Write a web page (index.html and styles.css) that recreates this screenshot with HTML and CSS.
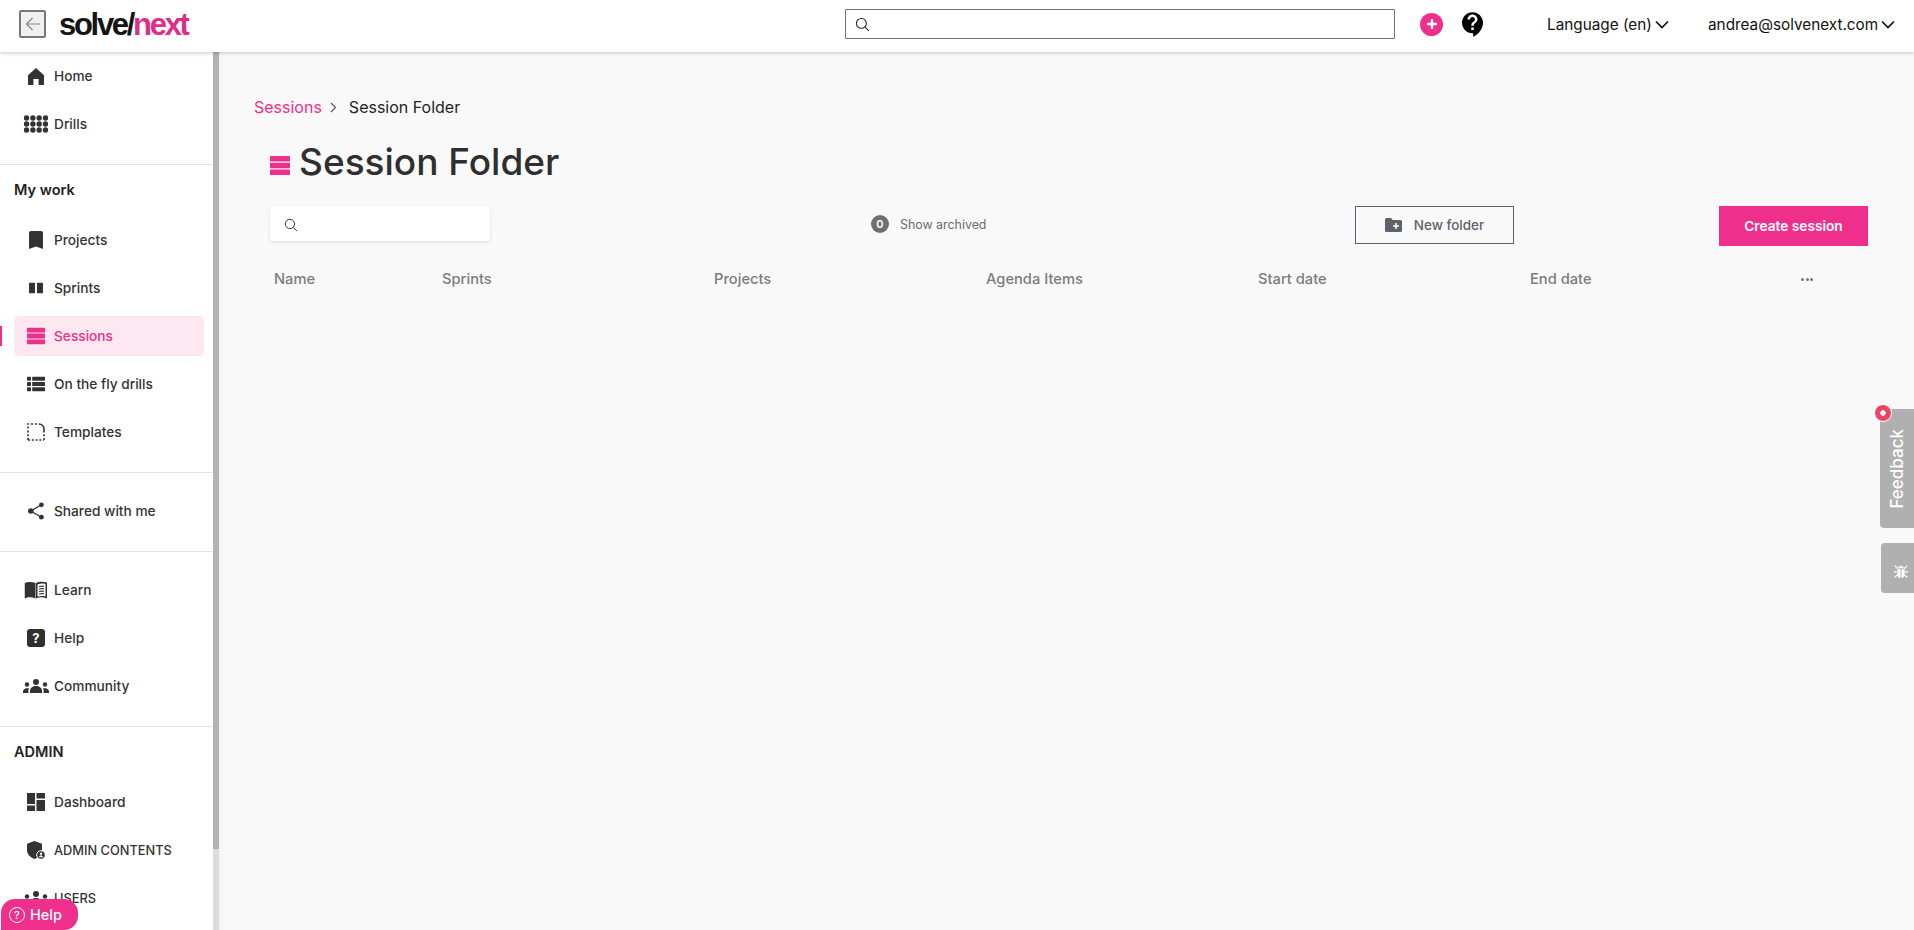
FILE: index.html
```html
<!DOCTYPE html>
<html lang="en">
<head>
<meta charset="utf-8">
<title>Session Folder</title>
<link rel="stylesheet" href="styles.css">
</head>
<body>
<svg class="defs" width="0" height="0" aria-hidden="true">
  <symbol id="i-search" viewBox="0 0 16 16"><circle cx="6.8" cy="6.8" r="5.3" fill="none" stroke="currentColor" stroke-width="1.1"/><path d="M10.8 10.8l4 4" stroke="currentColor" stroke-width="1.1" fill="none"/></symbol>
  <symbol id="i-home" viewBox="0 0 18 18"><path d="M1 8.2 9 1l8 7.2V18h-5.4v-6H6.4v6H1z" fill="currentColor"/></symbol>
  <symbol id="i-drills" viewBox="0 0 25 18"><g fill="currentColor"><circle cx="3" cy="3" r="2.7"/><circle cx="9.4" cy="3" r="2.7"/><circle cx="15.7" cy="3" r="2.7"/><circle cx="22" cy="3" r="2.7"/><circle cx="3" cy="9" r="2.7"/><circle cx="9.4" cy="9" r="2.7"/><circle cx="15.7" cy="9" r="2.7"/><circle cx="22" cy="9" r="2.7"/><circle cx="3" cy="15" r="2.7"/><circle cx="9.4" cy="15" r="2.7"/><circle cx="15.7" cy="15" r="2.7"/><circle cx="22" cy="15" r="2.7"/></g></symbol>
  <symbol id="i-book" viewBox="0 0 14 18"><path d="M2 0h10a2 2 0 0 1 2 2v16l-7-2.6L0 18V2a2 2 0 0 1 2-2z" fill="currentColor"/></symbol>
  <symbol id="i-sprints" viewBox="0 0 14 11"><rect width="6" height="11" rx=".8" fill="currentColor"/><rect x="8" width="6" height="11" rx=".8" fill="currentColor"/></symbol>
  <symbol id="i-sessions" viewBox="0 0 18 17"><g fill="currentColor"><rect width="18" height="5" rx=".6"/><rect y="6" width="18" height="5" rx=".6"/><rect y="12" width="18" height="5" rx=".6"/></g></symbol>
  <symbol id="i-fly" viewBox="0 0 18 15"><g fill="currentColor"><rect width="4" height="4.2" rx=".8"/><rect y="5.4" width="4" height="4.2" rx=".6"/><rect y="10.8" width="4" height="4.2" rx=".8"/><rect x="5.2" width="12.8" height="4.2" rx=".8"/><rect x="5.2" y="5.4" width="12.8" height="4.2" rx=".6"/><rect x="5.2" y="10.8" width="12.8" height="4.2" rx=".8"/></g></symbol>
  <symbol id="i-tpl" viewBox="0 0 18 18"><path d="M1 17V1h11" fill="none" stroke="currentColor" stroke-width="1.6" stroke-dasharray="2 1.8"/><path d="M17 17V9M1 17h16" fill="none" stroke="currentColor" stroke-width="1.6" stroke-dasharray="2 1.8"/><path d="M12 1a5 5 0 0 1 5 5v3" fill="none" stroke="currentColor" stroke-width="1.6"/></symbol>
  <symbol id="i-share" viewBox="0 0 16 18"><g fill="currentColor"><circle cx="13.4" cy="2.8" r="2.4"/><circle cx="2.8" cy="9" r="2.8"/><circle cx="13.4" cy="15.2" r="2.4"/></g><path d="M13.4 2.8 2.8 9l10.6 6.2" fill="none" stroke="currentColor" stroke-width="1.3"/></symbol>
  <symbol id="i-learn" viewBox="0 0 23 18"><path d="M0 2.2C3 .6 7.5.4 11 2v15.4C7.5 16 3 16 .6 17.6L0 17z" fill="currentColor"/><path d="M11.5 2c2.5-1.5 7-1.7 11-.6V17.6C19 16 14.5 16 11.5 17.4z" fill="currentColor"/><path d="M13 3.4c2.5-.9 5-1 8-.5v12.3c-3-.5-5.5-.4-8 .4z" fill="#fff"/><path d="M14.5 5.5c1.6-.4 3.4-.5 5-.3M14.5 8c1.6-.4 3.4-.5 5-.3M14.5 10.5c1.6-.4 3.4-.5 5-.3M14.5 13c1.6-.4 3.4-.5 5-.3" stroke="currentColor" stroke-width="1.1" fill="none"/></symbol>
  <symbol id="i-groups" viewBox="0 0 26 14"><g fill="currentColor"><circle cx="13" cy="3" r="3"/><circle cx="4" cy="5.5" r="2.2"/><circle cx="22" cy="5.5" r="2.2"/><path d="M7 14v-2.5C7 9 10 7 13 7s6 2 6 4.5V14z"/><path d="M0 14v-1.5C0 10.5 2 9 5.8 9 5.5 10 5.4 11 5.4 14zM26 14v-1.5c0-2-2-3.5-5.800-3.5.3 1 .4 2 .4 5z"/></g></symbol>
  <symbol id="i-dash" viewBox="0 0 18 18"><g fill="currentColor"><rect width="8" height="11"/><rect y="12.5" width="8" height="5.5"/><rect x="9.5" width="8.5" height="5.5"/><rect x="9.5" y="7" width="8.5" height="11"/></g></symbol>
  <symbol id="i-admin" viewBox="0 0 18 18"><path d="M7.5 0 15 2.8V9c0 4-3 7.5-7.5 9C3 16.5 0 13 0 9V2.8z" fill="currentColor"/><circle cx="14" cy="14" r="4.3" fill="currentColor" stroke="#fff" stroke-width="1"/><circle cx="14" cy="12.8" r="1.2" fill="#fff"/><path d="M11.7 16.2c.5-1.2 1.3-1.7 2.3-1.7s1.8.5 2.3 1.7z" fill="#fff"/></symbol>
  <symbol id="i-support" viewBox="3 2 17 20"><path d="M11.500 2C6.810 2 3 5.810 3 10.500S6.810 19 11.500 19h.5v3c4.860-2.340 8-7 8-11.500C20 5.810 16.190 2 11.500 2zm1 14.500h-2v-2h2v2zm0-3.500h-2c0-3.250 3-3 3-5 0-1.100-.9-2-2-2s-2 .9-2 2h-2c0-2.210 1.790-4 4-4s4 1.790 4 4c0 2.500-3 2.750-3 5z" fill="currentColor"/></symbol>
  <symbol id="i-chev" viewBox="0 0 14 9"><path d="M1 1.5 7 7.5l6-6" fill="none" stroke="currentColor" stroke-width="1.7"/></symbol>
</svg>

<header class="topbar">
  <button class="back" type="button" aria-label="Back">
    <svg width="16" height="14" viewBox="0 0 16 14"><path d="M7.5 1 1.5 7l6 6M1.5 7H15" fill="none" stroke="currentColor" stroke-width="1.2"/></svg>
  </button>
  <div class="logo">solve/<span class="logo-next">next</span></div>
  <div class="top-search"><svg class="ic-15"><use href="#i-search"/></svg></div>
  <span class="plus">
    <svg width="12" height="12" viewBox="0 0 12 12"><path d="M6 1v10M1 6h10" stroke="#fff" stroke-width="2.4"/></svg>
  </span>
  <svg class="support"><use href="#i-support"/></svg>
  <div class="top-menu lang">Language (en)<svg class="chev"><use href="#i-chev"/></svg></div>
  <div class="top-menu user">andrea@solvenext.com<svg class="chev"><use href="#i-chev"/></svg></div>
</header>

<div class="body-row">
  <nav class="sidebar">
    <div class="nav-scroll">
      <section class="group first">
        <a class="item"><span class="ico"><svg class="i-home"><use href="#i-home"/></svg></span>Home</a>
        <a class="item"><span class="ico"><svg class="i-drills"><use href="#i-drills"/></svg></span>Drills</a>
      </section>
      <section class="group titled">
        <h3 class="group-title">My work</h3>
        <a class="item"><span class="ico"><svg class="i-book"><use href="#i-book"/></svg></span>Projects</a>
        <a class="item"><span class="ico"><svg class="i-sprints"><use href="#i-sprints"/></svg></span>Sprints</a>
        <a class="item active"><span class="ico"><svg class="i-sessions"><use href="#i-sessions"/></svg></span>Sessions</a>
        <a class="item"><span class="ico"><svg class="i-fly"><use href="#i-fly"/></svg></span>On the fly drills</a>
        <a class="item"><span class="ico"><svg class="i-tpl"><use href="#i-tpl"/></svg></span>Templates</a>
      </section>
      <section class="group">
        <a class="item"><span class="ico"><svg class="i-share"><use href="#i-share"/></svg></span>Shared with me</a>
      </section>
      <section class="group">
        <a class="item"><span class="ico"><svg class="i-learn"><use href="#i-learn"/></svg></span>Learn</a>
        <a class="item"><span class="ico"><span class="i-help">?</span></span>Help</a>
        <a class="item"><span class="ico"><svg class="i-groups"><use href="#i-groups"/></svg></span>Community</a>
      </section>
      <section class="group titled last">
        <h3 class="group-title">ADMIN</h3>
        <a class="item"><span class="ico"><svg class="i-dash"><use href="#i-dash"/></svg></span>Dashboard</a>
        <a class="item caps"><span class="ico"><svg class="i-admin"><use href="#i-admin"/></svg></span>ADMIN CONTENTS</a>
        <a class="item caps"><span class="ico"><svg class="i-groups"><use href="#i-groups"/></svg></span>USERS</a>
      </section>
    </div>
    <div class="scrolltrack"><div class="scrollthumb"></div></div>
  </nav>

  <main class="content">
    <div class="crumbs">
      <a class="crumb-link">Sessions</a>
      <svg class="crumb-sep" viewBox="0 0 7 11"><path d="M1 1l4.5 4.5L1 10" fill="none" stroke="currentColor" stroke-width="1.1"/></svg>
      <span class="crumb-cur">Session Folder</span>
    </div>
    <div class="inner">
      <h1 class="title"><svg class="title-ico"><use href="#i-sessions"/></svg>Session Folder</h1>
      <div class="toolbar">
        <div class="filter"><svg class="ic-14"><use href="#i-search"/></svg></div>
        <div class="archived"><span class="badge">0</span>Show archived</div>
        <button class="btn-folder" type="button">
          <svg width="17" height="14" viewBox="0 0 17 14"><path d="M1.5 0H6l1.7 2h7.8A1.5 1.5 0 0 1 17 3.5v9a1.5 1.5 0 0 1-1.5 1.5h-14A1.5 1.5 0 0 1 0 12.5v-11A1.5 1.5 0 0 1 1.5 0z" fill="currentColor"/><path d="M11 5v6M8 8h6" stroke="#fff" stroke-width="1.5"/></svg>
          New folder
        </button>
        <button class="btn-create" type="button">Create session</button>
      </div>
      <div class="table-head">
        <span class="col col-name">Name</span>
        <span class="col">Sprints</span>
        <span class="col">Projects</span>
        <span class="col">Agenda Items</span>
        <span class="col">Start date</span>
        <span class="col">End date</span>
        <span class="col-more"><i></i><i></i><i></i></span>
      </div>
    </div>
  </main>
</div>

<button class="help-btn" type="button">
  <span class="help-q">?</span>
  Help
</button>
<div class="feedback"><span class="feedback-text">Feedback</span><span class="feedback-dot"></span></div>
<div class="bug">
  <svg width="16" height="16" viewBox="0 0 18 18"><path d="M5 7h8v6a4 4 0 0 1-8 0zM6 6a3 3 0 0 1 6 0z" fill="#fff"/><path d="M2 3l3.5 3.5M16 3l-3.5 3.5M1 10h4M13 10h4M2 16l3.5-3M16 16l-3.5-3" stroke="#fff" stroke-width="1.3" fill="none"/><path d="M9 7v10" stroke="#b0b0b0" stroke-width="1"/></svg>
</div>
</body>
</html>
```
FILE: styles.css
```css
* { box-sizing: border-box; }
html, body { margin: 0; height: 100%; overflow: hidden; }
body {
  font-family: "Inter", "Open Sans", sans-serif;
  color: #2f2f2f;
  background: #f9f9f9;
  display: flex;
  flex-direction: column;
}
.defs { position: absolute; }
button { font: inherit; cursor: pointer; }

.topbar {
  height: 52px;
  flex: none;
  background: #fff;
  display: flex;
  align-items: center;
  padding: 0 0 4px 19px;
  box-shadow: 0 1px 4px rgba(0, 0, 0, .22);
  position: relative;
  z-index: 2;
}
.back {
  width: 27px;
  height: 28px;
  padding: 0;
  border: 2px solid #777;
  border-radius: 2px;
  background: #f0f0f0;
  color: #888;
  display: flex;
  align-items: center;
  justify-content: center;
}
.logo {
  margin-left: 13px;
  width: 131px;
  font-family: "Liberation Sans", sans-serif;
  font-weight: 700;
  font-size: 31px;
  letter-spacing: -2.3px;
  color: #141414;
  line-height: 1;
  white-space: nowrap;
}
.logo-next { color: #dc2f87; }
.top-search {
  margin-left: 655px;
  width: 550px;
  height: 30px;
  border: 1px solid #6f6f6f;
  border-radius: 1px;
  display: flex;
  align-items: center;
  padding-left: 9px;
  color: #222;
}
.ic-15 { width: 15px; height: 15px; }
.ic-14 { width: 14px; height: 14px; }
.plus {
  margin-left: 25px;
  width: 23px;
  height: 23px;
  border-radius: 50%;
  background: #ee2f8c;
  display: flex;
  align-items: center;
  justify-content: center;
}
.support { margin-left: 19px; width: 21px; height: 25px; color: #000; }
.top-menu {
  display: flex;
  align-items: center;
  gap: 3px;
  font-size: 15.3px;
  color: #111;
  white-space: nowrap;
}
.lang { margin-left: 64px; width: 123px; }
.user { margin-left: 38px; }
.chev { width: 14px; height: 9px; flex: none; }

.body-row { flex: 1; min-height: 0; display: flex; }
.sidebar { width: 219px; flex: none; background: #fff; display: flex; }
.nav-scroll { width: 213px; height: 878px; overflow: hidden; }
.scrolltrack { width: 6px; background: #dcdcdc; }
.scrollthumb { height: 797px; background: #b3b3b3; }

.group { padding: 14px 0 16px; border-bottom: 1px solid #e4e4e4; }
.group.first { padding-top: 0; }
.group.titled { padding-top: 11px; }
.group.last { border-bottom: 0; }
.group-title {
  margin: 0 0 14px;
  height: 26px;
  padding: 1px 14px 0;
  font-size: 14.5px;
  font-weight: 600;
  line-height: 25px;
  color: #222;
}
.item {
  display: flex;
  align-items: center;
  height: 48px;
  padding-left: 54px;
  position: relative;
  isolation: isolate;
  font-size: 13.7px;
  font-weight: 500;
  color: #333;
}
.item.caps { font-size: 12.8px; }
.ico {
  position: absolute;
  left: 36px;
  top: 50%;
  transform: translate(-50%, -50%);
  display: flex;
  align-items: center;
  justify-content: center;
}
.i-home { width: 18px; height: 18px; }
.i-drills { width: 25px; height: 18px; }
.i-book { width: 14px; height: 18px; }
.i-sprints { width: 14px; height: 11px; }
.i-sessions { width: 18px; height: 17px; }
.i-fly { width: 18px; height: 15px; }
.i-tpl { width: 18px; height: 18px; }
.i-share { width: 16px; height: 18px; }
.i-learn { width: 23px; height: 18px; }
.i-help {
  width: 18px;
  height: 18px;
  border-radius: 3px;
  background: #2f2f2f;
  color: #fff;
  font-size: 13px;
  font-weight: 700;
  line-height: 18px;
  text-align: center;
}
.i-groups { width: 26px; height: 14px; }
.i-dash { width: 18px; height: 18px; }
.i-admin { width: 18px; height: 18px; }
.item.active { color: #ee2f8c; }
.item.active::before {
  content: "";
  position: absolute;
  z-index: -1;
  left: 14px;
  right: 9px;
  top: 4px;
  bottom: 4px;
  background: #fde8f2;
  border-radius: 4px;
}
.item.active::after {
  content: "";
  position: absolute;
  left: 0;
  top: 14px;
  width: 2px;
  height: 20px;
  background: #ee2f8c;
}

.content { flex: 1; min-width: 0; padding: 44px 46px 0 35px; box-shadow: inset 6px 0 6px -6px rgba(0, 0, 0, .06); }
.crumbs { display: flex; align-items: center; height: 22px; font-size: 16px; }
.crumb-link { color: #ee2f8c; }
.crumb-sep { width: 7px; height: 11px; margin: 0 12px 0 8px; color: #555; }
.crumb-cur { color: #222; }
.inner { padding-left: 16px; }
.title {
  margin: 19px 0 0;
  height: 48px;
  display: flex;
  align-items: center;
  font-size: 37px;
  font-weight: 500;
  color: #2f2f2f;
  white-space: nowrap;
}
.title-ico { width: 20px; height: 19px; margin: 8px 9px 0 0; color: #ee2f8c; flex: none; }
.toolbar { display: flex; align-items: flex-start; margin-top: 21px; }
.filter {
  width: 220px;
  height: 35px;
  background: #fff;
  border-radius: 2px;
  box-shadow: 0 1px 3px rgba(0, 0, 0, .12);
  display: flex;
  align-items: center;
  padding: 3px 0 0 14px;
}
.archived {
  margin: 9px 0 0 381px;
  width: 484px;
  display: flex;
  align-items: center;
  gap: 11px;
  font-size: 12.4px;
  color: #6b6b6b;
}
.badge {
  width: 18px;
  height: 18px;
  border-radius: 50%;
  background: #6f6f6f;
  color: #fff;
  font-size: 11px;
  font-weight: 600;
  display: flex;
  align-items: center;
  justify-content: center;
}
.btn-folder {
  width: 159px;
  height: 38px;
  border: 1px solid #5c636b;
  background: transparent;
  color: #5c636b;
  font-size: 13.5px;
  font-weight: 500;
  display: flex;
  align-items: center;
  justify-content: center;
  gap: 12px;
  padding: 0;
}
.btn-create {
  margin-left: 205px;
  width: 149px;
  height: 40px;
  border: 0;
  background: #ee2f8c;
  color: #fff;
  font-size: 13.7px;
  font-weight: 600;
  padding: 0;
}
.table-head {
  margin-top: 23px;
  display: flex;
  align-items: center;
  height: 20px;
  padding-left: 4px;
  font-size: 14.7px;
  font-weight: 500;
  color: #7c7c7c;
}
.col { width: 272px; flex: none; }
.col-name { width: 168px; }
.col-more { display: flex; gap: 1.5px; margin-left: -1px; }
.col-more i { width: 3px; height: 3px; border-radius: 50%; background: #777; }

.help-btn {
  position: fixed;
  left: 1px;
  bottom: 0;
  width: 77px;
  height: 31px;
  border: 0;
  border-radius: 14px 14px 14px 0;
  background: #ee2f8c;
  color: #fff;
  font-size: 14.5px;
  font-weight: 500;
  display: flex;
  align-items: center;
  gap: 5px;
  padding: 0 0 0 8px;
  z-index: 3;
}
.help-q {
  width: 16px;
  height: 16px;
  border: 1px solid #fff;
  border-radius: 50%;
  font-size: 11px;
  line-height: 14px;
  text-align: center;
}
.feedback {
  position: fixed;
  right: 0;
  top: 409px;
  width: 34px;
  height: 119px;
  background: #b0b0b0;
  border-radius: 4px 0 0 4px;
  display: flex;
  align-items: center;
  justify-content: center;
}
.feedback-text {
  writing-mode: vertical-rl;
  transform: rotate(180deg);
  color: #fff;
  font-size: 17px;
  font-weight: 500;
}
.feedback-dot {
  position: absolute;
  left: -6px;
  top: -5px;
  width: 18px;
  height: 18px;
  border-radius: 50%;
  background: radial-gradient(circle, #fff 0 2.5px, #ee4464 3px);
  border: 1.5px solid #fff;
}
.bug {
  position: fixed;
  right: 0;
  top: 543px;
  width: 33px;
  height: 50px;
  padding: 6px 0 0 7px;
  background: #b0b0b0;
  border-radius: 4px 0 0 4px;
  display: flex;
  align-items: center;
  justify-content: center;
}
```
